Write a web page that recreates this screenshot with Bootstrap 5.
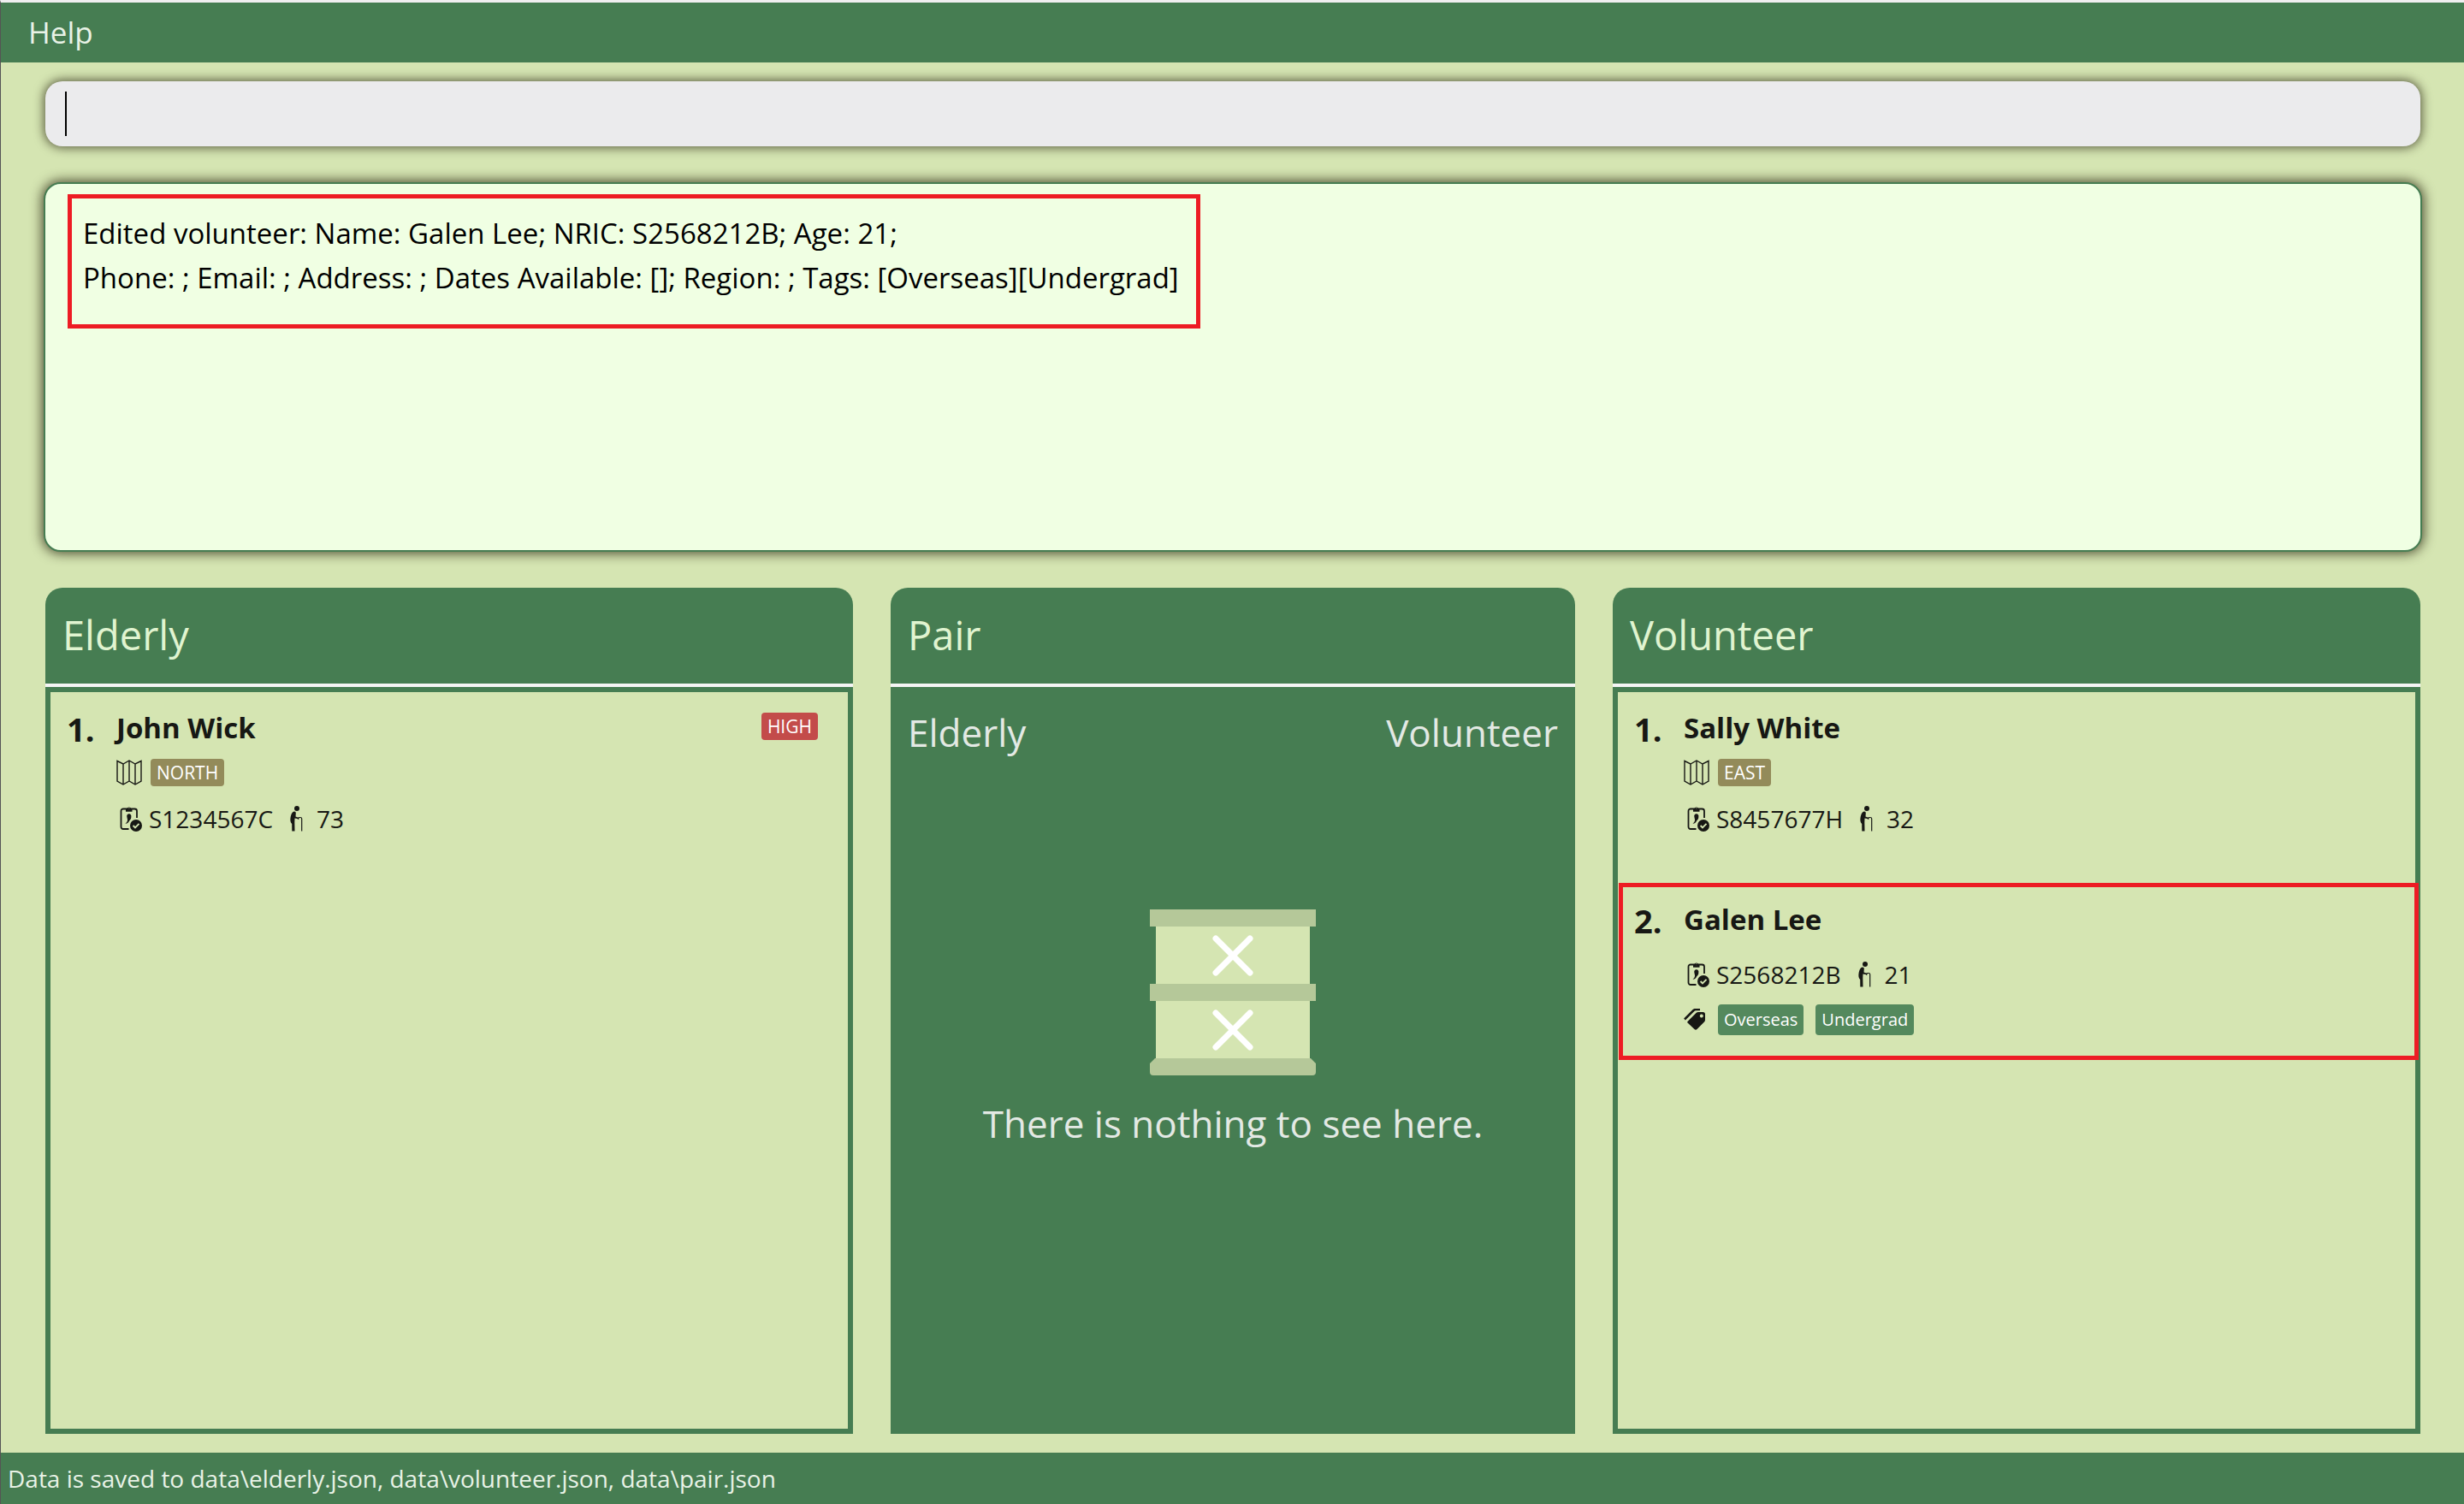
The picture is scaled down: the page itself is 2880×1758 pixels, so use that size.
<!DOCTYPE html>
<html lang="en">
<head>
<meta charset="utf-8">
<meta name="viewport" content="width=device-width, initial-scale=1">
<title>Elderly and volunteer pairing</title>
<link href="https://cdn.jsdelivr.net/npm/bootstrap@5.3.0/dist/css/bootstrap.min.css" rel="stylesheet">
<style>
:root { --green:#467d52; --pale:#d5e5b2; --mint:#f0ffe3; --ink:#171814; --alert:#ed1c24; }
body { font-family:"Open Sans","Noto Sans",sans-serif; font-size:28px; line-height:40px; color:var(--ink); background:var(--pale); }
.app-window { border-top:3px solid #f0eef0; border-left:1px solid #555; }
.menu-bar { background:var(--green); height:70px; padding:0 32px; }
.menu-bar .btn { font-size:35px; line-height:48px; color:#e8f2e6; --bs-btn-border-width:0; }
.main-area { padding:22px 51px 22px 52px; gap:44px; }
.command-wrap { height:76px; }
.command-box, .command-box:focus { height:76px; background:#ebebed; border:0; border-radius:20px; padding:0 24px; font-size:34px; box-shadow:0 0 12px 2px rgba(32,28,10,.65); }
.text-caret { width:2px; height:52px; left:23px; top:12px; background:#000; }
.result-box { background:var(--mint); border:2px solid var(--green); border-radius:20px; height:432px; padding:12px 26px; box-shadow:0 0 14px 2px rgba(32,28,10,.75); margin:-2px -2px 0; }
.result-mark { border:5px solid var(--alert); padding:15px 20px 28px 13px; height:157px; font-size:33px; line-height:52px; color:#000; }
.lists { gap:44px; margin-top:-2px; }
.side-list { flex:59 1 0; min-width:0; }
.pair-list { flex:50 1 0; min-width:0; }
.list-head { background:var(--green); border-bottom:4px solid #f5f5f5; border-radius:20px 20px 0 0; height:116px; padding:20px; font-size:47px; line-height:70px; color:#e0f4d0; font-weight:400; }
.list-body { border:6px solid var(--green); }
.pair-body { background:var(--green); color:#e3e9e4; font-size:44px; line-height:64px; padding:21px 20px; }
.empty-note { padding-top:175px; gap:24px; }
.person { padding:18px 35px 18px 19px; min-height:223px; }
.person-marked { border:5px solid var(--alert); margin:0 -4px 0 1px; padding:14px 34px 12px 13px; min-height:207px; }
.person-no { font-size:38px; line-height:50px; font-weight:700; width:58px; }
.person-name { font-size:33px; line-height:48px; font-weight:700; }
.chip { font-size:21px; line-height:32px; padding:0 7px; border-radius:4px; color:#fff; font-weight:400; }
.chip-region { background:#938b5a; }
.chip-high { background:#c34c4a; margin-top:6px; }
.chip-tag { background:#54895d; font-size:20px; line-height:36px; }
.row-region { height:32px; margin-top:12px; gap:10px; }
.row-id { height:40px; margin-top:18px; padding-left:4px; }
.person-name + .row-id { margin-top:20px; }
.walk-icon { margin:0 16px 0 20px; }
.row-tags { height:36px; margin-top:15px; gap:14px; }
svg { display:block; flex:none; }
.foot-bar { background:var(--green); color:#e8f2e6; height:60px; padding:0 8px; }
</style>
</head>
<body>
<svg width="0" height="0" class="position-absolute" aria-hidden="true">
  <symbol id="i-map" viewBox="0 0 30 30"><path d="M1 1.500 8 5l7-4 7 4 7-3.500V25l-7 4-7-4-7 4-7-4zM8 5v24M15 1v24M22 5v24" fill="none" stroke="#171814" stroke-width="1.400"/></symbol>
  <symbol id="i-id" viewBox="0 0 26 30"><path d="M10.500 27H4a2.500 2.500 0 0 1-2.500-2.500V6A2.500 2.500 0 0 1 4 3.500h13.500A2.500 2.500 0 0 1 20 6v8" fill="none" stroke="#171814" stroke-width="1.800"/><path fill-rule="evenodd" d="M7 6.800V3.200h1.300a2.700 2.700 0 0 1 5 0H14.500v3.600zM10.800 2a1.100 1.100 0 1 0 .01 0z" fill="#171814"/><path d="M10.800 9.300a2.600 2.600 0 0 1 2.500 3.500c.2 2-.8 3.400-2.300 4.700-.5 2-2 3-4.500 3.300 1.600-1 2.300-2.400 2.600-4.200L8.300 12.500a2.600 2.600 0 0 1 2.500-3.200z" fill="#171814"/><circle cx="19" cy="23" r="7" fill="#171814"/><path d="m15.600 23 2.400 2.500 4.500-4.700" fill="none" stroke="#d5e5b2" stroke-width="1.900"/></symbol>
  <symbol id="i-walk" viewBox="0 0 15 30"><circle cx="8" cy="3" r="3" fill="#171814"/><path d="M3 7.500C4.500 5.800 7 6.300 6.800 8.500L6.500 12.500 10.500 14v1.300L5.500 14.500 5.300 19 5.500 29.500H2.300L2.200 21C.2 19 .2 16.500.5 14 .8 11.500 1.500 9 3 7.500z" fill="#171814"/><path d="M9.500 15.800V14.500q0-1 1.500-1h1q1.700 0 1.700 1.500v14.500" fill="none" stroke="#171814" stroke-width="1.200"/></symbol>
  <symbol id="i-tags" viewBox="0 0 26 26"><path d="M1 12.500 11.500 2Q12.500 1 14 1h5" fill="none" stroke="#171814" stroke-width="2.500"/><path fill-rule="evenodd" d="M4.500 15 14.500 5q1-1 2.500-1h5.500Q25 4 25 6.500V13q0 1.500-1 2.500l-8.500 8.500q-1.500 1.500-3 0L4.500 16.500q-.7-.8 0-1.500zM20.800 6.500a2 2 0 1 0 .01 0z" fill="#171814"/></symbol>
</svg>
<div class="app-window d-flex flex-column min-vh-100">
  <nav class="menu-bar d-flex align-items-center"><button type="button" class="btn p-0">Help</button></nav>
  <main class="main-area d-flex flex-column flex-grow-1">
    <div class="command-wrap position-relative">
      <input type="text" class="form-control command-box" aria-label="Command">
      <span class="text-caret position-absolute"></span>
    </div>
    <section class="result-box d-flex align-items-start">
      <div class="result-mark">Edited volunteer: Name: Galen Lee; NRIC: S2568212B; Age: 21;<br>Phone: ; Email: ; Address: ; Dates Available: []; Region: ; Tags: [Overseas][Undergrad]</div>
    </section>
    <div class="lists d-flex flex-grow-1">
      <section class="side-list d-flex flex-column">
        <h2 class="list-head m-0">Elderly</h2>
        <div class="list-body flex-grow-1">
          <article class="person d-flex">
            <div class="person-no">1.</div>
            <div class="flex-grow-1">
              <div class="d-flex justify-content-between align-items-start"><div class="person-name">John Wick</div><span class="chip chip-high">HIGH</span></div>
              <div class="row-region d-flex align-items-center"><svg width="30" height="30"><use href="#i-map"/></svg><span class="chip chip-region">NORTH</span></div>
              <div class="row-id d-flex align-items-center"><svg width="26" height="30"><use href="#i-id"/></svg><span class="ms-2">S1234567C</span><svg class="walk-icon" width="15" height="30"><use href="#i-walk"/></svg><span>73</span></div>
            </div>
          </article>
        </div>
      </section>
      <section class="pair-list d-flex flex-column">
        <h2 class="list-head m-0">Pair</h2>
        <div class="pair-body flex-grow-1 d-flex flex-column">
          <div class="d-flex justify-content-between"><span>Elderly</span><span>Volunteer</span></div>
          <div class="empty-note d-flex flex-column align-items-center">
            <svg width="194" height="194" viewBox="0 0 194 194" role="img" aria-label="Empty drawers"><path d="M7 10h180v174H7z" fill="#d5e5b2"/><path d="M0 0h194v20H0zM0 87h194v20H0zM6 174h182l6 6v10q0 4-4 4H4q-4 0-4-4v-10z" fill="#b5c899"/><path d="m77 34 40 40m0-40L77 74m0 47 40 40m0-40-40 40" stroke="#fff" stroke-width="7" stroke-linecap="round"/></svg>
            <div>There is nothing to see here.</div>
          </div>
        </div>
      </section>
      <section class="side-list d-flex flex-column">
        <h2 class="list-head m-0">Volunteer</h2>
        <div class="list-body flex-grow-1">
          <article class="person d-flex">
            <div class="person-no">1.</div>
            <div class="flex-grow-1">
              <div class="person-name">Sally White</div>
              <div class="row-region d-flex align-items-center"><svg width="30" height="30"><use href="#i-map"/></svg><span class="chip chip-region">EAST</span></div>
              <div class="row-id d-flex align-items-center"><svg width="26" height="30"><use href="#i-id"/></svg><span class="ms-2">S8457677H</span><svg class="walk-icon" width="15" height="30"><use href="#i-walk"/></svg><span>32</span></div>
            </div>
          </article>
          <article class="person person-marked d-flex">
            <div class="person-no">2.</div>
            <div class="flex-grow-1">
              <div class="person-name">Galen Lee</div>
              <div class="row-id d-flex align-items-center"><svg width="26" height="30"><use href="#i-id"/></svg><span class="ms-2">S2568212B</span><svg class="walk-icon" width="15" height="30"><use href="#i-walk"/></svg><span>21</span></div>
              <div class="row-tags d-flex align-items-center"><svg width="26" height="26"><use href="#i-tags"/></svg><span class="chip chip-tag">Overseas</span><span class="chip chip-tag">Undergrad</span></div>
            </div>
          </article>
        </div>
      </section>
    </div>
  </main>
  <footer class="foot-bar d-flex align-items-center">Data is saved to data\elderly.json, data\volunteer.json, data\pair.json</footer>
</div>
<script src="https://cdn.jsdelivr.net/npm/bootstrap@5.3.0/dist/js/bootstrap.bundle.min.js"></script>
</body>
</html>
